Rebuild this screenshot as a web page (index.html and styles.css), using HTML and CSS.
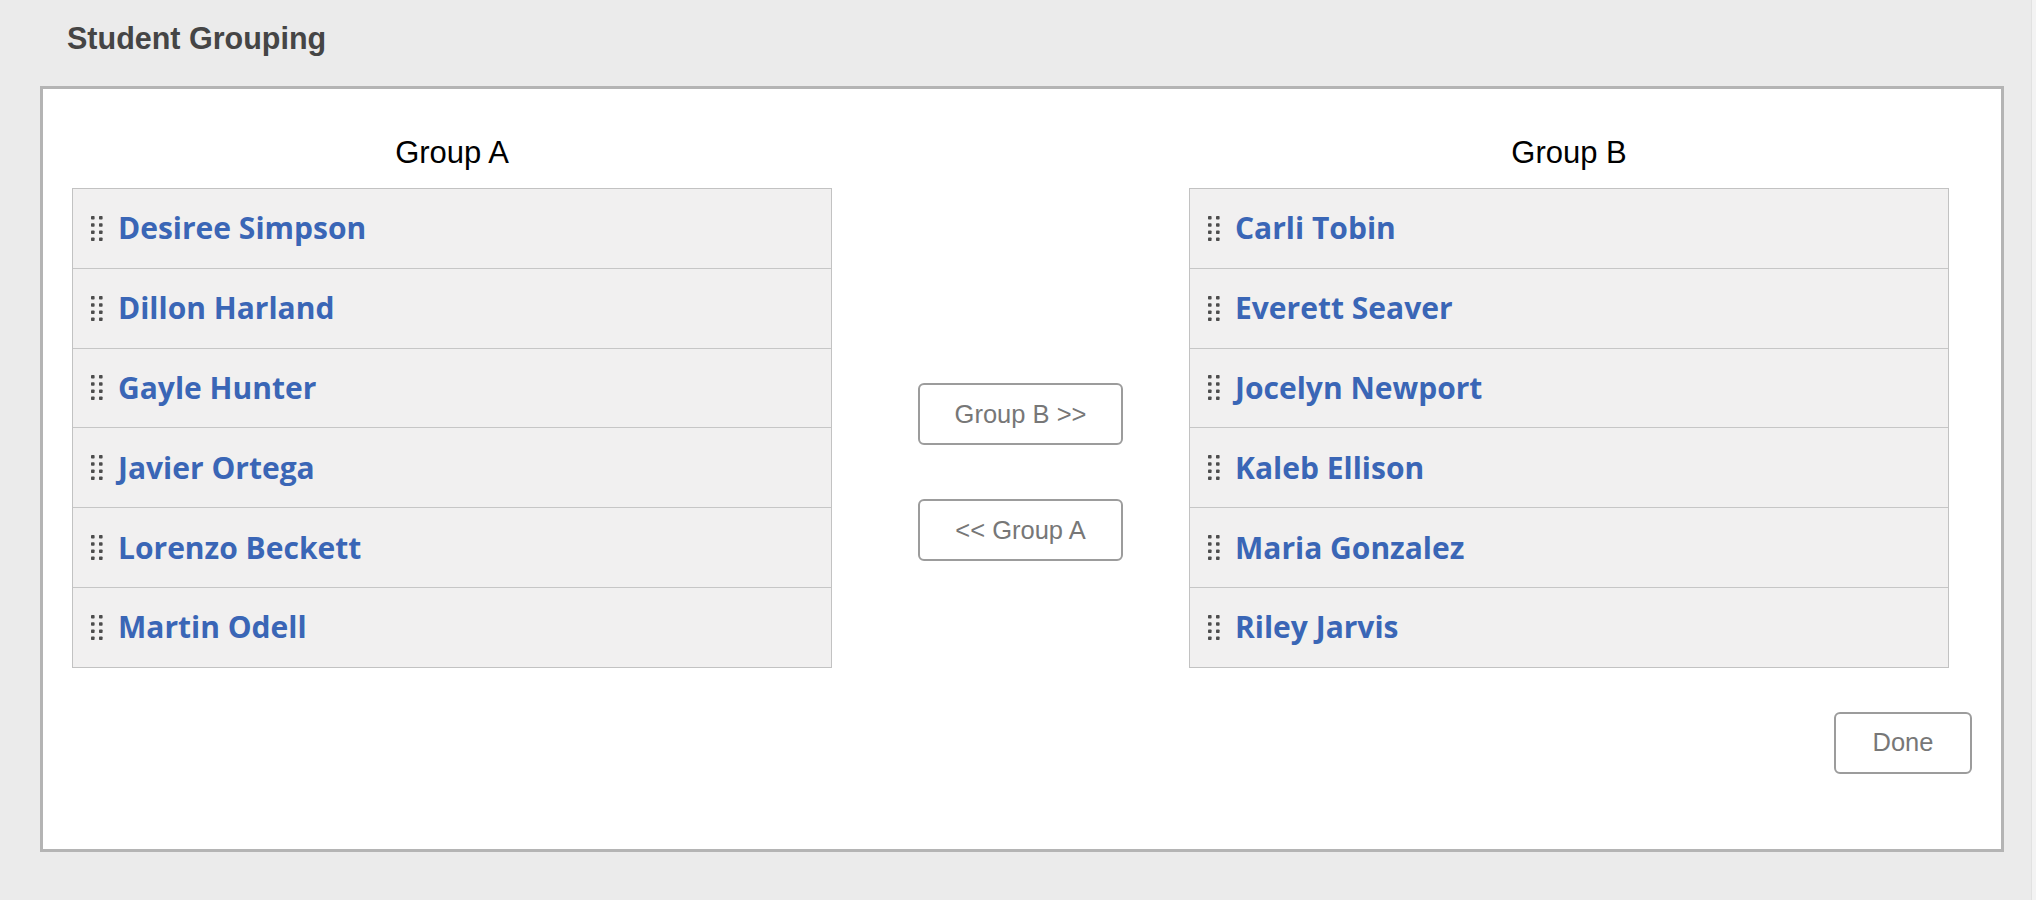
FILE: index.html
```html
<!DOCTYPE html>
<html lang="en">
<head>
<meta charset="utf-8">
<title>Student Grouping</title>
<link rel="stylesheet" href="styles.css">
</head>
<body>
<header class="page-head"><h1 class="page-title">Student Grouping</h1></header>
<main class="panel">
  <div class="grouping">
    <h2 class="group-title col-a">Group A</h2>
    <h2 class="group-title col-b">Group B</h2>
    <ul class="student-list col-a">
      <li class="student"><svg class="handle" viewBox="0 0 12 25" width="12" height="25"><g fill="#4d4d4d"><rect x="0" y="0" width="3.6" height="3.6" rx="0.8"/><rect x="8" y="0" width="3.6" height="3.6" rx="0.8"/><rect x="0" y="7.2" width="3.6" height="3.6" rx="0.8"/><rect x="8" y="7.2" width="3.6" height="3.6" rx="0.8"/><rect x="0" y="14.4" width="3.6" height="3.6" rx="0.8"/><rect x="8" y="14.4" width="3.6" height="3.6" rx="0.8"/><rect x="0" y="21.4" width="3.6" height="3.6" rx="0.8"/><rect x="8" y="21.4" width="3.6" height="3.6" rx="0.8"/></g></svg><span class="name">Desiree Simpson</span></li>
      <li class="student"><svg class="handle" viewBox="0 0 12 25" width="12" height="25"><g fill="#4d4d4d"><rect x="0" y="0" width="3.6" height="3.6" rx="0.8"/><rect x="8" y="0" width="3.6" height="3.6" rx="0.8"/><rect x="0" y="7.2" width="3.6" height="3.6" rx="0.8"/><rect x="8" y="7.2" width="3.6" height="3.6" rx="0.8"/><rect x="0" y="14.4" width="3.6" height="3.6" rx="0.8"/><rect x="8" y="14.4" width="3.6" height="3.6" rx="0.8"/><rect x="0" y="21.4" width="3.6" height="3.6" rx="0.8"/><rect x="8" y="21.4" width="3.6" height="3.6" rx="0.8"/></g></svg><span class="name">Dillon Harland</span></li>
      <li class="student"><svg class="handle" viewBox="0 0 12 25" width="12" height="25"><g fill="#4d4d4d"><rect x="0" y="0" width="3.6" height="3.6" rx="0.8"/><rect x="8" y="0" width="3.6" height="3.6" rx="0.8"/><rect x="0" y="7.2" width="3.6" height="3.6" rx="0.8"/><rect x="8" y="7.2" width="3.6" height="3.6" rx="0.8"/><rect x="0" y="14.4" width="3.6" height="3.6" rx="0.8"/><rect x="8" y="14.4" width="3.6" height="3.6" rx="0.8"/><rect x="0" y="21.4" width="3.6" height="3.6" rx="0.8"/><rect x="8" y="21.4" width="3.6" height="3.6" rx="0.8"/></g></svg><span class="name">Gayle Hunter</span></li>
      <li class="student"><svg class="handle" viewBox="0 0 12 25" width="12" height="25"><g fill="#4d4d4d"><rect x="0" y="0" width="3.6" height="3.6" rx="0.8"/><rect x="8" y="0" width="3.6" height="3.6" rx="0.8"/><rect x="0" y="7.2" width="3.6" height="3.6" rx="0.8"/><rect x="8" y="7.2" width="3.6" height="3.6" rx="0.8"/><rect x="0" y="14.4" width="3.6" height="3.6" rx="0.8"/><rect x="8" y="14.4" width="3.6" height="3.6" rx="0.8"/><rect x="0" y="21.4" width="3.6" height="3.6" rx="0.8"/><rect x="8" y="21.4" width="3.6" height="3.6" rx="0.8"/></g></svg><span class="name">Javier Ortega</span></li>
      <li class="student"><svg class="handle" viewBox="0 0 12 25" width="12" height="25"><g fill="#4d4d4d"><rect x="0" y="0" width="3.6" height="3.6" rx="0.8"/><rect x="8" y="0" width="3.6" height="3.6" rx="0.8"/><rect x="0" y="7.2" width="3.6" height="3.6" rx="0.8"/><rect x="8" y="7.2" width="3.6" height="3.6" rx="0.8"/><rect x="0" y="14.4" width="3.6" height="3.6" rx="0.8"/><rect x="8" y="14.4" width="3.6" height="3.6" rx="0.8"/><rect x="0" y="21.4" width="3.6" height="3.6" rx="0.8"/><rect x="8" y="21.4" width="3.6" height="3.6" rx="0.8"/></g></svg><span class="name">Lorenzo Beckett</span></li>
      <li class="student"><svg class="handle" viewBox="0 0 12 25" width="12" height="25"><g fill="#4d4d4d"><rect x="0" y="0" width="3.6" height="3.6" rx="0.8"/><rect x="8" y="0" width="3.6" height="3.6" rx="0.8"/><rect x="0" y="7.2" width="3.6" height="3.6" rx="0.8"/><rect x="8" y="7.2" width="3.6" height="3.6" rx="0.8"/><rect x="0" y="14.4" width="3.6" height="3.6" rx="0.8"/><rect x="8" y="14.4" width="3.6" height="3.6" rx="0.8"/><rect x="0" y="21.4" width="3.6" height="3.6" rx="0.8"/><rect x="8" y="21.4" width="3.6" height="3.6" rx="0.8"/></g></svg><span class="name">Martin Odell</span></li>
    </ul>
    <div class="move-controls">
      <button class="btn" type="button">Group B &gt;&gt;</button>
      <button class="btn" type="button">&lt;&lt; Group A</button>
    </div>
    <ul class="student-list col-b">
      <li class="student"><svg class="handle" viewBox="0 0 12 25" width="12" height="25"><g fill="#4d4d4d"><rect x="0" y="0" width="3.6" height="3.6" rx="0.8"/><rect x="8" y="0" width="3.6" height="3.6" rx="0.8"/><rect x="0" y="7.2" width="3.6" height="3.6" rx="0.8"/><rect x="8" y="7.2" width="3.6" height="3.6" rx="0.8"/><rect x="0" y="14.4" width="3.6" height="3.6" rx="0.8"/><rect x="8" y="14.4" width="3.6" height="3.6" rx="0.8"/><rect x="0" y="21.4" width="3.6" height="3.6" rx="0.8"/><rect x="8" y="21.4" width="3.6" height="3.6" rx="0.8"/></g></svg><span class="name">Carli Tobin</span></li>
      <li class="student"><svg class="handle" viewBox="0 0 12 25" width="12" height="25"><g fill="#4d4d4d"><rect x="0" y="0" width="3.6" height="3.6" rx="0.8"/><rect x="8" y="0" width="3.6" height="3.6" rx="0.8"/><rect x="0" y="7.2" width="3.6" height="3.6" rx="0.8"/><rect x="8" y="7.2" width="3.6" height="3.6" rx="0.8"/><rect x="0" y="14.4" width="3.6" height="3.6" rx="0.8"/><rect x="8" y="14.4" width="3.6" height="3.6" rx="0.8"/><rect x="0" y="21.4" width="3.6" height="3.6" rx="0.8"/><rect x="8" y="21.4" width="3.6" height="3.6" rx="0.8"/></g></svg><span class="name">Everett Seaver</span></li>
      <li class="student"><svg class="handle" viewBox="0 0 12 25" width="12" height="25"><g fill="#4d4d4d"><rect x="0" y="0" width="3.6" height="3.6" rx="0.8"/><rect x="8" y="0" width="3.6" height="3.6" rx="0.8"/><rect x="0" y="7.2" width="3.6" height="3.6" rx="0.8"/><rect x="8" y="7.2" width="3.6" height="3.6" rx="0.8"/><rect x="0" y="14.4" width="3.6" height="3.6" rx="0.8"/><rect x="8" y="14.4" width="3.6" height="3.6" rx="0.8"/><rect x="0" y="21.4" width="3.6" height="3.6" rx="0.8"/><rect x="8" y="21.4" width="3.6" height="3.6" rx="0.8"/></g></svg><span class="name">Jocelyn Newport</span></li>
      <li class="student"><svg class="handle" viewBox="0 0 12 25" width="12" height="25"><g fill="#4d4d4d"><rect x="0" y="0" width="3.6" height="3.6" rx="0.8"/><rect x="8" y="0" width="3.6" height="3.6" rx="0.8"/><rect x="0" y="7.2" width="3.6" height="3.6" rx="0.8"/><rect x="8" y="7.2" width="3.6" height="3.6" rx="0.8"/><rect x="0" y="14.4" width="3.6" height="3.6" rx="0.8"/><rect x="8" y="14.4" width="3.6" height="3.6" rx="0.8"/><rect x="0" y="21.4" width="3.6" height="3.6" rx="0.8"/><rect x="8" y="21.4" width="3.6" height="3.6" rx="0.8"/></g></svg><span class="name">Kaleb Ellison</span></li>
      <li class="student"><svg class="handle" viewBox="0 0 12 25" width="12" height="25"><g fill="#4d4d4d"><rect x="0" y="0" width="3.6" height="3.6" rx="0.8"/><rect x="8" y="0" width="3.6" height="3.6" rx="0.8"/><rect x="0" y="7.2" width="3.6" height="3.6" rx="0.8"/><rect x="8" y="7.2" width="3.6" height="3.6" rx="0.8"/><rect x="0" y="14.4" width="3.6" height="3.6" rx="0.8"/><rect x="8" y="14.4" width="3.6" height="3.6" rx="0.8"/><rect x="0" y="21.4" width="3.6" height="3.6" rx="0.8"/><rect x="8" y="21.4" width="3.6" height="3.6" rx="0.8"/></g></svg><span class="name">Maria Gonzalez</span></li>
      <li class="student"><svg class="handle" viewBox="0 0 12 25" width="12" height="25"><g fill="#4d4d4d"><rect x="0" y="0" width="3.6" height="3.6" rx="0.8"/><rect x="8" y="0" width="3.6" height="3.6" rx="0.8"/><rect x="0" y="7.2" width="3.6" height="3.6" rx="0.8"/><rect x="8" y="7.2" width="3.6" height="3.6" rx="0.8"/><rect x="0" y="14.4" width="3.6" height="3.6" rx="0.8"/><rect x="8" y="14.4" width="3.6" height="3.6" rx="0.8"/><rect x="0" y="21.4" width="3.6" height="3.6" rx="0.8"/><rect x="8" y="21.4" width="3.6" height="3.6" rx="0.8"/></g></svg><span class="name">Riley Jarvis</span></li>
    </ul>
  </div>
  <div class="panel-foot">
    <button class="btn btn-done" type="button">Done</button>
  </div>
</main>
</body>
</html>
```
FILE: styles.css
```css
* { box-sizing: border-box; }
html, body { margin: 0; padding: 0; }
body {
  width: 2036px;
  height: 900px;
  overflow: hidden;
  background: linear-gradient(to right, #ebebeb 0, #ebebeb 2031px, #e2e2e2 2031px, #e2e2e2 2032px, #f3f3f3 2032px);
  font-family: "Liberation Sans", Arial, sans-serif;
  color: #000;
}
.page-head {
  padding: 21px 0 0 67px;
  height: 86px;
}
.page-title {
  margin: 0;
  font-size: 30.5px;
  line-height: 35px;
  font-weight: 700;
  color: #454545;
}
.panel {
  margin-left: 40px;
  width: 1964px;
  height: 766px;
  background: #fff;
  border: 3px solid #b4b4b4;
  padding: 46px 29px 0 29px;
  display: flex;
  flex-direction: column;
}
.grouping {
  display: grid;
  grid-template-columns: 760px 357px 760px;
  grid-template-rows: auto auto;
  row-gap: 17px;
}
.col-a { grid-column: 1; }
.col-b { grid-column: 3; }
.group-title {
  grid-row: 1;
  margin: 0;
  text-align: center;
  font-size: 31px;
  line-height: 36px;
  font-weight: 400;
  color: #000;
}
.student-list {
  grid-row: 2;
  list-style: none;
  margin: 0;
  padding: 0;
  border: 1px solid #c2c2c2;
  background: #f1f0f0;
}
.student {
  height: 79.8px;
  display: flex;
  align-items: center;
  padding-left: 18px;
  gap: 15px;
  border-top: 1px solid #c6c6c6;
}
.student:first-child { height: 78.8px; border-top: 0; }
.handle { flex: none; display: block; }
.name {
  font-family: "Open Sans", sans-serif;
  font-weight: 700;
  font-size: 30px;
  color: #3a66b6;
  line-height: 1.2;
}
.move-controls {
  grid-row: 2;
  grid-column: 2;
  display: flex;
  flex-direction: column;
  gap: 54px;
  padding: 195px 0 0 86px;
}
.btn {
  width: 205px;
  height: 62px;
  background: #fff;
  border: 2px solid #9c9c9c;
  border-radius: 6px;
  font-family: "Liberation Sans", Arial, sans-serif;
  font-size: 25.5px;
  color: #777;
  padding: 0;
}
.panel-foot {
  display: flex;
  justify-content: flex-end;
  padding-top: 44px;
}
.btn-done { width: 138px; }
```
